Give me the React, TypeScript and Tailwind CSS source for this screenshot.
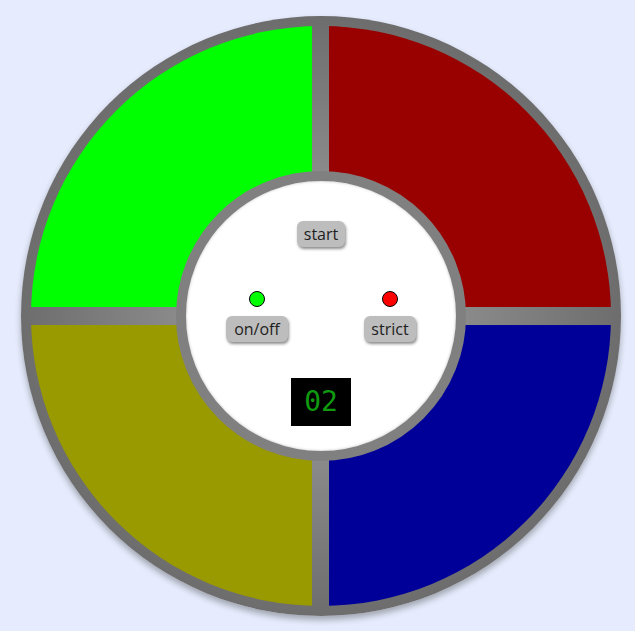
import React from "react";

function Btn({ label, w }: { label: string; w: string }) {
  return (
    <div
      className={`${w} h-[26px] rounded-[6px] bg-[#bdbdbd] shadow-[1px_2px_3px_rgba(0,0,0,0.45)] flex items-center justify-center text-[16px] text-[#1e1e1e] leading-none`}
      style={{ fontFamily: '"Open Sans", "Noto Sans", sans-serif' }}
    >
      {label}
    </div>
  );
}

export default function App() {
  return (
    <div className="w-[635px] h-[631px] bg-[#e6ecfd] pl-[21px] pt-[16px]">
      <div className="relative w-[600px] h-[600px] rounded-full p-[10px] bg-[radial-gradient(circle_closest-side,#959595_0%,#8a8a8a_48%,#6d6d6d_100%)] shadow-[0_4px_6px_rgba(0,0,0,0.3)]">
        <div className="w-[580px] h-[580px] rounded-full overflow-hidden grid grid-cols-[281px_282px] grid-rows-[281px_281px] gap-x-[17px] gap-y-[18px]">
          <div className="bg-[#00ff00]" />
          <div className="bg-[#990000]" />
          <div className="bg-[#999900]" />
          <div className="bg-[#000099]" />
        </div>
        <div className="absolute left-[155px] top-[155px] w-[290px] h-[290px] rounded-full border-[10px] border-[#808080] bg-white shadow-[inset_0_0_3px_rgba(0,0,0,0.25)] flex flex-col items-center pt-[40px]">
          <Btn label="start" w="w-[48px]" />
          <div className="w-full flex justify-between px-[40px] mt-[44px]">
            <div className="flex flex-col items-center gap-[9px]">
              <div className="w-[16px] h-[16px] rounded-full bg-[#00ff00] border border-black" />
              <Btn label="on/off" w="w-[62px]" />
            </div>
            <div className="flex flex-col items-center gap-[9px]">
              <div className="w-[16px] h-[16px] rounded-full bg-[#ff0000] border border-black" />
              <Btn label="strict" w="w-[52px]" />
            </div>
          </div>
          <div
            className="mt-[36px] w-[60px] h-[48px] bg-black flex items-center justify-center text-[28px] text-[#0f9a0f] leading-none"
            style={{ fontFamily: '"DejaVu Sans Mono", monospace' }}
          >
            02
          </div>
        </div>
      </div>
    </div>
  );
}
